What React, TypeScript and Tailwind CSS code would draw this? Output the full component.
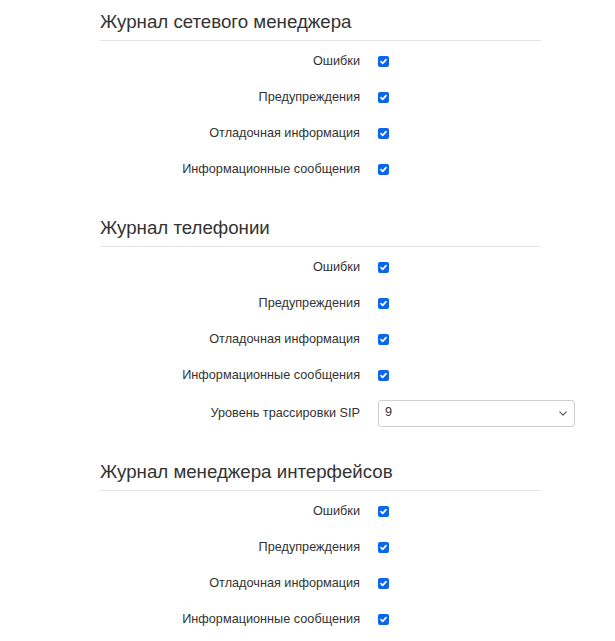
import React from 'react';

type Row = { label: string; kind: 'check' | 'select'; value?: string };

const logRows: Row[] = [
  { label: 'Ошибки', kind: 'check' },
  { label: 'Предупреждения', kind: 'check' },
  { label: 'Отладочная информация', kind: 'check' },
  { label: 'Информационные сообщения', kind: 'check' },
];

const sections: { title: string; rows: Row[] }[] = [
  { title: 'Журнал сетевого менеджера', rows: logRows },
  {
    title: 'Журнал телефонии',
    rows: [...logRows, { label: 'Уровень трассировки SIP', kind: 'select', value: '9' }],
  },
  { title: 'Журнал менеджера интерфейсов', rows: logRows },
];

const CheckMark: React.FC = () => (
  <span className="flex h-[11px] w-[11px] items-center justify-center rounded-[2px] bg-[#0b66ec]">
    <svg viewBox="0 0 10 10" className="h-[9px] w-[9px]" fill="none" stroke="#fff" strokeWidth={1.9} strokeLinecap="round" strokeLinejoin="round">
      <path d="M2.2 5.2 4.1 7 7.8 3" />
    </svg>
  </span>
);

const SelectBox: React.FC<{ value: string }> = ({ value }) => (
  <div className="flex h-[27px] w-[197px] items-center justify-between rounded-[3px] border border-[#cfcfcf] bg-white pl-[6px] pr-[7px] text-[12.7px] text-[#333]">
    <span>{value}</span>
    <svg viewBox="0 0 10 6" className="h-[5px] w-[8px]" fill="none" stroke="#555" strokeWidth={1.4} strokeLinecap="round" strokeLinejoin="round">
      <path d="M1 1 5 5 9 1" />
    </svg>
  </div>
);

const FormRow: React.FC<{ row: Row }> = ({ row }) => (
  <div className={`flex items-center ${row.kind === 'select' ? 'h-[38px] pt-[2px]' : 'h-9'}`}>
    <label className="w-[260px] pt-[2px] text-right text-[12.7px] text-[#333]">{row.label}</label>
    <div className="ml-[18px] flex items-center">
      {row.kind === 'check' ? <CheckMark /> : <SelectBox value={row.value ?? ''} />}
    </div>
  </div>
);

export default function App() {
  return (
    <div className="min-h-[641px] w-[615px] bg-white pl-[100px] pt-[11px]" style={{ fontFamily: '"Liberation Sans", Arial, sans-serif' }}>
      {sections.map((s, i) => (
        <section key={s.title} className={i > 0 ? 'mt-[30px]' : ''}>
          <h2 className="w-[441px] border-b border-[#e5e5e5] pb-[7px] text-[18.7px] leading-[22px] text-[#333]">{s.title}</h2>
          <div className="mt-[2px]">
            {s.rows.map((r) => (
              <FormRow key={r.label} row={r} />
            ))}
          </div>
        </section>
      ))}
    </div>
  );
}
